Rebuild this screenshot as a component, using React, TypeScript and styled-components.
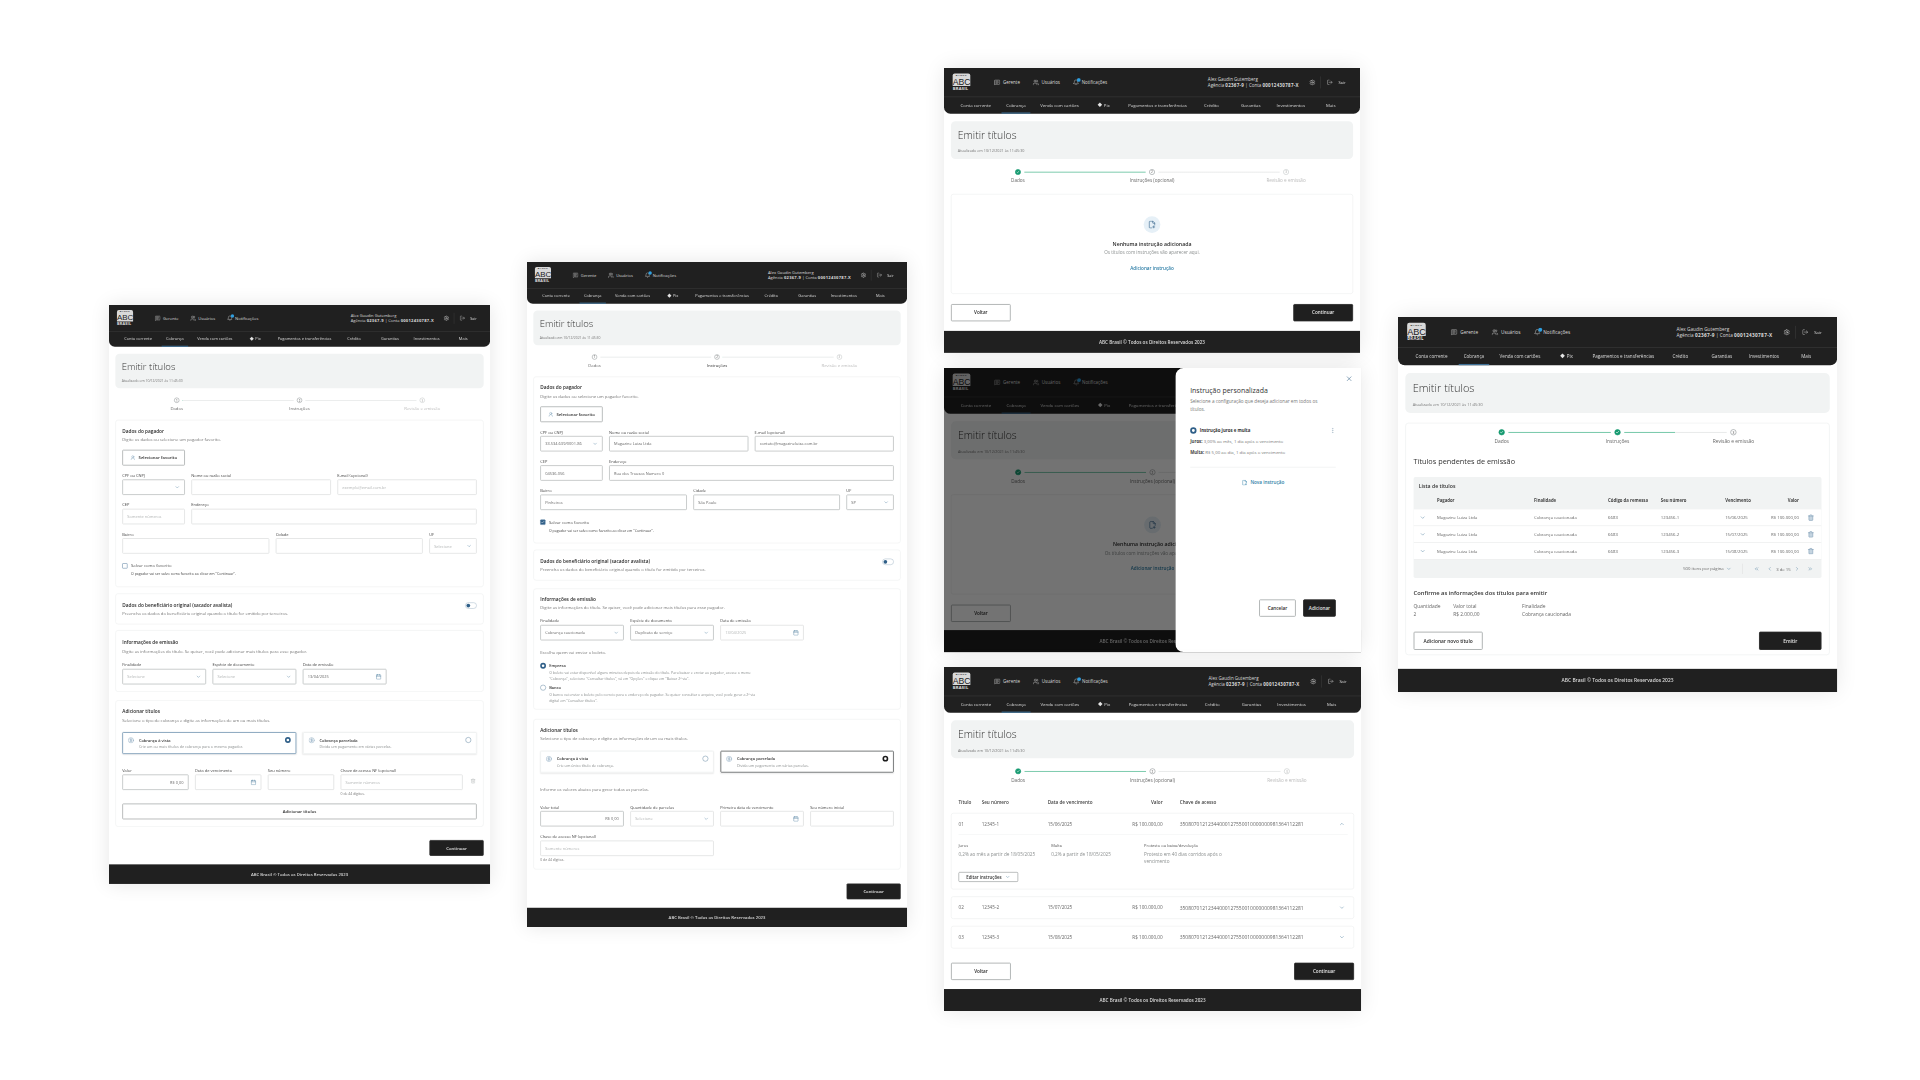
import React from "react"
import styled, { createGlobalStyle } from "styled-components"
import {
  Bell,
  Calendar,
  Check,
  ChevronDown,
  ChevronLeft,
  ChevronRight,
  ChevronUp,
  ChevronsLeft,
  ChevronsRight,
  CircleDollarSign,
  FilePlus2,
  LogOut,
  MessageSquareText,
  MoreVertical,
  Settings,
  Trash2,
  UserRound,
  Users,
  X,
} from "lucide-react"

const GlobalStyle = createGlobalStyle`
  html, body { margin: 0; background: #fff; }
  * { box-sizing: border-box; }
  body { font-family: "Open Sans", "Noto Sans", sans-serif; color: #333; }
`

const Canvas = styled.div`
  position: relative;
  width: 1920px;
  height: 1080px;
  overflow: hidden;
  background: #fff;
`

const Screen = styled.section<{ $x: number; $y: number; $scale: number; $h: number }>`
  position: absolute;
  left: ${p => p.$x}px;
  top: ${p => p.$y}px;
  width: 1440px;
  height: ${p => p.$h}px;
  display: flex;
  flex-direction: column;
  overflow: hidden;
  background: #fff;
  transform: scale(${p => p.$scale});
  transform-origin: 0 0;
  box-shadow: 0 0 70px rgba(0, 0, 0, 0.1);
`

/* header */
const HeaderWrap = styled.header`
  flex: none;
  background: #202020;
  border-radius: 0 0 22px 22px;
  color: #dcdcdc;
`

const TopBar = styled.div`
  display: flex;
  align-items: center;
  height: 101px;
  padding: 0 50px 0 30px;
  border-bottom: 2px solid #3a3a3a;
  font-size: 15px;
`

const Logo = styled.div`
  width: 61px;
  display: flex;
  flex-direction: column;
  align-items: stretch;
  margin-right: 82px;
`

const LogoBox = styled.div`
  height: 43px;
  border-radius: 7px 7px 0 0;
  background: #d9d9d9;
  color: #222;
  text-align: center;
  font-family: "Liberation Sans", sans-serif;
  overflow: hidden;
`

const LogoSmall = styled.div`
  font-size: 8px;
  line-height: 14px;
  letter-spacing: 2px;
  font-weight: 700;
`

const LogoBig = styled.div`
  font-size: 30px;
  line-height: 30px;
  letter-spacing: 0;
`

const LogoCountry = styled.div`
  font-size: 14px;
  line-height: 18px;
  font-weight: 700;
  letter-spacing: 1px;
  color: #e0e0e0;
`

const HeaderLink = styled.span`
  display: flex;
  align-items: center;
  gap: 9px;
  margin-right: 44px;
  font-size: 15.5px;
`

const BellWrap = styled.span`
  position: relative;
  display: flex;
`

const BellDot = styled.i`
  position: absolute;
  top: -4px;
  right: -5px;
  width: 13px;
  height: 13px;
  border-radius: 50%;
  background: #2f9fe0;
`

const UserInfo = styled.div`
  margin-left: auto;
  width: 332px;
  font-size: 15.5px;
  line-height: 21px;
  white-space: nowrap;
  b { font-weight: 700; letter-spacing: 1px; }
`

const HeaderTools = styled.div`
  display: flex;
  align-items: center;
  margin-left: 19px;
`

const ToolDivider = styled.i`
  width: 2px;
  height: 42px;
  margin: 0 20px 0 17px;
  background: #3a3a3a;
`

const ExitLink = styled.span`
  display: flex;
  align-items: center;
  gap: 19px;
  font-size: 14px;
`

const NavBar = styled.nav`
  display: flex;
  height: 57px;
  padding-left: 30px;
  font-size: 15px;
`

const NavCell = styled.span<{ $w: number }>`
  flex: 0 0 ${p => p.$w}px;
  display: flex;
  justify-content: center;
`

const NavLabel = styled.span<{ $active?: boolean }>`
  display: flex;
  align-items: center;
  gap: 8px;
  padding: 0 17px;
  border-bottom: 4px solid ${p => (p.$active ? "#3f7197" : "transparent")};
`

const PixMark = styled.i`
  width: 11px;
  height: 11px;
  background: #e4e4e4;
  transform: rotate(45deg);
`

/* footer */
const FooterBar = styled.footer<{ $h?: number }>`
  flex: none;
  margin-top: auto;
  height: ${p => p.$h ?? 76}px;
  display: flex;
  align-items: center;
  justify-content: center;
  background: #202020;
  color: #dcdcdc;
  font-size: 16px;
  font-weight: 600;
`

/* page parts */
const Main = styled.main`
  display: flex;
  flex-direction: column;
  padding: 26px 24px 0;
`

const TitleCard = styled.div`
  height: 131px;
  padding: 24px;
  border-radius: 16px;
  background: #f1f3f3;
`

const PageTitle = styled.h1`
  margin: 0;
  font-size: 36px;
  line-height: 50px;
  font-weight: 300;
  color: #333;
`

const Updated = styled.p`
  margin: 20px 0 0;
  font-size: 13px;
  line-height: 18px;
  color: #777;
`

const StepperWrap = styled.div<{ $w: number; $mt: number }>`
  width: ${p => p.$w}px;
  margin: ${p => p.$mt}px auto 0;
`

const StepTrack = styled.div<{ $w: number }>`
  display: flex;
  align-items: center;
  gap: 12px;
  padding: 0 ${p => p.$w / 6 - 10}px;
`

const StepDot = styled.span<{ $state: "done" | "open" | "off" }>`
  flex: none;
  width: 20px;
  height: 20px;
  display: flex;
  align-items: center;
  justify-content: center;
  border-radius: 50%;
  border: 2px solid ${p => (p.$state === "done" ? "#159a70" : p.$state === "open" ? "#8e9496" : "#c4c8c8")};
  background: ${p => (p.$state === "done" ? "#159a70" : "#fff")};
  color: ${p => (p.$state === "open" ? "#777" : p.$state === "off" ? "#bbb" : "#fff")};
  font-size: 11px;
  font-weight: 600;
`

const StepLine = styled.i<{ $fill: number }>`
  flex: 1;
  height: 3px;
  background: linear-gradient(
    to right,
    #69c3a1 ${p => p.$fill}%,
    #e6e8e8 ${p => p.$fill}%
  );
`

const StepLabels = styled.div`
  display: grid;
  grid-template-columns: repeat(3, 1fr);
  margin-top: 9px;
`

const StepLabel = styled.span<{ $tone: string }>`
  text-align: center;
  font-size: 16px;
  line-height: 22px;
  color: ${p => p.$tone};
`

const Card = styled.div<{ $mt?: number; $pt?: number; $pb?: number }>`
  margin-top: ${p => p.$mt ?? 30}px;
  padding: ${p => p.$pt ?? 27}px 24px ${p => p.$pb ?? 26}px;
  border: 2px solid #eceeee;
  border-radius: 10px;
`

const CardTitle = styled.h3`
  margin: 0;
  font-size: 18px;
  line-height: 24px;
  font-weight: 600;
  color: #2b2b2b;
`

const CardText = styled.p<{ $mt?: number }>`
  margin: ${p => p.$mt ?? 11}px 0 0;
  font-size: 16px;
  line-height: 22px;
  color: #777;
`

const OutlineButton = styled.button<{ $w?: number; $mt?: number }>`
  flex: none;
  display: flex;
  align-items: center;
  justify-content: center;
  gap: 12px;
  width: ${p => (p.$w ? `${p.$w}px` : "100%")};
  height: 60px;
  margin-top: ${p => p.$mt ?? 0}px;
  border: 3px solid #a9adad;
  border-radius: 4px;
  background: #fff;
  color: #2b2b2b;
  font: 600 16px "Open Sans", sans-serif;
`

const DarkButton = styled(OutlineButton)`
  border-color: #2a2a2a;
  background: #1f1f1f;
  color: #e6e6e6;
`

const FormGrid = styled.div<{ $cols: string; $mt?: number }>`
  display: grid;
  grid-template-columns: ${p => p.$cols};
  gap: 28px 24px;
  margin-top: ${p => p.$mt ?? 27}px;
`

const FieldWrap = styled.div<{ $span?: number }>`
  display: flex;
  flex-direction: column;
  gap: 5px;
  min-width: 0;
  grid-column: span ${p => p.$span ?? 1};
`

const FieldLabel = styled.label`
  font-size: 15px;
  line-height: 20px;
  color: #444;
`

const FieldBox = styled.div<{ $strong?: boolean; $right?: boolean }>`
  height: 59px;
  display: flex;
  align-items: center;
  justify-content: ${p => (p.$right ? "flex-end" : "space-between")};
  padding: 0 16px;
  border: 3px solid ${p => (p.$strong ? "#bcc0c0" : "#dfe1e1")};
  border-radius: 4px;
  color: #666;
  font-size: 15px;
  white-space: nowrap;
  overflow: hidden;
`

const FieldValue = styled.span<{ $muted?: boolean }>`
  color: ${p => (p.$muted ? "#b2b5b5" : "#666")};
`

const FieldHint = styled.span`
  font-size: 13px;
  line-height: 18px;
  color: #777;
`

const TrashSlot = styled.div`
  display: flex;
  justify-content: center;
  padding-top: 40px;
  color: #b6baba;
`

const CheckRow = styled.div`
  display: flex;
  align-items: center;
  gap: 13px;
  margin-top: 34px;
  font-size: 16px;
  line-height: 24px;
  color: #555;
`

const CheckBox = styled.i<{ $on?: boolean }>`
  width: 20px;
  height: 20px;
  display: flex;
  align-items: center;
  justify-content: center;
  border-radius: 3px;
  border: 2px solid #5f84a3;
  background: ${p => (p.$on ? "#2f5f88" : "#fff")};
  color: #fff;
`

const CheckNote = styled.p`
  margin: 10px 0 12px 33px;
  font-size: 13.5px;
  line-height: 18px;
  color: #444;
`

const SwitchRow = styled.div`
  display: flex;
  justify-content: space-between;
  align-items: flex-start;
`

const SwitchTrack = styled.i`
  width: 44px;
  height: 24px;
  margin-top: 2px;
  padding: 3px;
  display: flex;
  border-radius: 12px;
  border: 2px solid #a9bccb;
`

const SwitchKnob = styled.b`
  width: 14px;
  height: 14px;
  border-radius: 50%;
  background: #2f5f88;
`

const OptionGrid = styled.div`
  display: grid;
  grid-template-columns: 1fr 1fr;
  gap: 25px;
  margin-top: 34px;
`

const OptionCard = styled.div<{ $active?: string }>`
  height: 83px;
  display: flex;
  align-items: flex-start;
  gap: 18px;
  padding: 16px 18px;
  border: 3px solid ${p => p.$active ?? "#eceeee"};
  border-radius: 4px;
  box-shadow: 0 2px 6px rgba(0, 0, 0, 0.08);
`

const OptionIcon = styled.span`
  display: flex;
  color: #6f93b0;
`

const OptionBody = styled.div`
  flex: 1;
`

const OptionTitle = styled.div`
  font-size: 15px;
  line-height: 22px;
  font-weight: 600;
  color: #333;
`

const OptionText = styled.div`
  margin-top: 5px;
  font-size: 14px;
  line-height: 20px;
  color: #8b8f8f;
`

const RadioDot = styled.i<{ $color?: string }>`
  flex: none;
  width: 22px;
  height: 22px;
  display: flex;
  align-items: center;
  justify-content: center;
  border-radius: 50%;
  border: ${p => (p.$color ? `6px solid ${p.$color}` : "2px solid #6f8fa8")};
  background: #fff;
`

const RadioRow = styled.div<{ $mt: number }>`
  display: flex;
  align-items: center;
  gap: 12px;
  margin-top: ${p => p.$mt}px;
  font-size: 15px;
  font-weight: 600;
  line-height: 22px;
  color: #333;
`

const RadioText = styled.p`
  margin: 6px 0 0 34px;
  max-width: 800px;
  font-size: 13.5px;
  line-height: 22px;
  color: #8b8f8f;
`

const ActionRow = styled.div<{ $mt: number; $end?: boolean }>`
  display: flex;
  justify-content: ${p => (p.$end ? "flex-end" : "space-between")};
  margin-top: ${p => p.$mt}px;
`

/* empty state */
const EmptyCard = styled.div`
  height: 346px;
  margin-top: 35px;
  display: flex;
  flex-direction: column;
  align-items: center;
  padding-top: 75px;
  border: 2px solid #eceeee;
  border-radius: 8px;
`

const EmptyIcon = styled.span`
  width: 58px;
  height: 58px;
  display: flex;
  align-items: center;
  justify-content: center;
  border-radius: 50%;
  background: #e6f0f7;
  color: #2f5f88;
`

const EmptyTitle = styled.div`
  margin-top: 26px;
  font-size: 18px;
  line-height: 24px;
  font-weight: 600;
  color: #2b2b2b;
`

const EmptyText = styled.div`
  margin-top: 7px;
  font-size: 16px;
  line-height: 22px;
  color: #8b8f8f;
`

const TextLink = styled.span`
  display: flex;
  align-items: center;
  gap: 10px;
  margin-top: 31px;
  font-size: 16px;
  line-height: 22px;
  font-weight: 600;
  color: #2c7da6;
`

/* drawer */
const Backdrop = styled.div`
  position: absolute;
  inset: 0;
  background: rgba(0, 0, 0, 0.55);
`

const Drawer = styled.aside`
  position: absolute;
  top: 0;
  right: 0;
  bottom: 0;
  width: 641px;
  display: flex;
  flex-direction: column;
  padding: 62px 87px 0 51px;
  border-radius: 28px 0 0 28px;
  background: #fff;
`

const DrawerClose = styled.span`
  position: absolute;
  top: 24px;
  right: 28px;
  color: #4f7796;
`

const DrawerTitle = styled.h2`
  margin: 0;
  font-size: 24px;
  line-height: 28px;
  font-weight: 500;
  color: #333;
`

const DrawerText = styled.p`
  margin: 12px 0 0;
  max-width: 480px;
  font-size: 16px;
  line-height: 26px;
  color: #777;
`

const InstructionHead = styled.div`
  display: flex;
  align-items: center;
  gap: 11px;
  margin-top: 51px;
  font-size: 15px;
  font-weight: 700;
  color: #333;
  svg { margin-left: auto; color: #9fb4c4; }
`

const InstructionLine = styled.div<{ $mt: number }>`
  margin-top: ${p => p.$mt}px;
  font-size: 15px;
  line-height: 22px;
  color: #777;
  b { color: #444; }
`

const DrawerRule = styled.hr`
  width: 100%;
  margin: 39px 0 0;
  border: 0;
  border-top: 3px solid #f1f3f3;
`

const DrawerLink = styled(TextLink)`
  justify-content: center;
  margin-top: 41px;
`

const DrawerActions = styled.div`
  display: flex;
  justify-content: flex-end;
  gap: 25px;
  margin-top: auto;
  margin-bottom: 122px;
`

/* installment table */
const titleCols = "80px 228px 200px 197px 1fr 40px"

const TitleHead = styled.div`
  display: grid;
  grid-template-columns: ${titleCols};
  margin-top: 54px;
  padding: 0 20px 0 26px;
  font-size: 16px;
  line-height: 22px;
  font-weight: 600;
  color: #444;
`

const TitleRow = styled.div<{ $mt: number; $open?: boolean }>`
  margin-top: ${p => p.$mt}px;
  padding: 0 20px 0 24px;
  border: 2px solid #eceeee;
  border-radius: 8px;
`

const TitleCells = styled.div<{ $line?: boolean }>`
  display: grid;
  grid-template-columns: ${titleCols};
  align-items: center;
  height: 74px;
  border-bottom: ${p => (p.$line ? "2px solid #f1f3f3" : "0")};
  font-size: 16px;
  color: #666;
`

const CellRight = styled.span`
  display: flex;
  justify-content: flex-end;
  white-space: nowrap;
`

const CellKey = styled.span`
  padding-left: 59px;
  font-size: 17px;
  white-space: nowrap;
`

const CellKeyHead = styled.span`
  padding-left: 59px;
`

const CellChevron = styled.span`
  display: flex;
  justify-content: center;
  color: #5f8aa8;
`

const Detail = styled.div`
  display: grid;
  grid-template-columns: 320px 321px 300px;
  padding-top: 25px;
`

const DetailLabel = styled.div`
  font-size: 14px;
  line-height: 20px;
  color: #555;
`

const DetailText = styled.div`
  margin-top: 8px;
  font-size: 16px;
  line-height: 25px;
  color: #8b8f8f;
`

const EditButton = styled.button`
  display: flex;
  align-items: center;
  justify-content: center;
  gap: 12px;
  width: 206px;
  height: 34px;
  margin: 25px 0 24px;
  border: 2px solid #8d9192;
  border-radius: 4px;
  background: #fff;
  color: #333;
  font: 600 15px "Open Sans", sans-serif;
  svg { color: #5f8aa8; }
`

/* review */
const ReviewCard = styled.div`
  margin-top: 32px;
  padding: 19px 25px 15px;
  border: 2px solid #eceeee;
  border-radius: 10px;
`

const ReviewTitle = styled.h2`
  margin: 38px 0 0;
  font-size: 24px;
  line-height: 32px;
  font-weight: 400;
  color: #333;
`

const ListBlock = styled.div`
  margin-top: 36px;
  border-radius: 6px;
  overflow: hidden;
  background: #f1f3f3;
`

const ListTitle = styled.div`
  padding: 17px 17px 0;
  font-size: 17px;
  line-height: 24px;
  font-weight: 600;
  color: #333;
`

const listCols = "77px 318px 243px 173px 211px 158px 84px 76px"

const ListHead = styled.div`
  display: grid;
  grid-template-columns: ${listCols};
  height: 65px;
  padding-top: 26px;
  font-size: 14px;
  line-height: 20px;
  font-weight: 700;
  color: #444;
`

const ListRow = styled.div`
  display: grid;
  grid-template-columns: ${listCols};
  align-items: center;
  height: 55px;
  border-bottom: 2px solid #e6e8e8;
  background: #fff;
  font-size: 14px;
  color: #666;
`

const ListChevron = styled.span`
  display: flex;
  padding-left: 20px;
  color: #5f8aa8;
`

const ListTrash = styled.span`
  display: flex;
  padding-left: 28px;
  color: #7d9cb5;
`

const Pager = styled.div`
  display: flex;
  align-items: center;
  justify-content: flex-end;
  height: 60px;
  padding-right: 28px;
  font-size: 14px;
  color: #666;
`

const PagerSize = styled.span`
  display: flex;
  align-items: center;
  gap: 8px;
  padding-right: 35px;
  border-right: 2px solid #e0e2e2;
  line-height: 34px;
  svg { color: #5f8aa8; }
`

const PagerNav = styled.span`
  display: flex;
  align-items: center;
  gap: 25px;
  padding-left: 36px;
  svg { color: #5f8aa8; }
`

const PagerMid = styled.span`
  display: flex;
  align-items: center;
  gap: 12px;
`

const ConfirmTitle = styled.h3`
  margin: 37px 0 0;
  font-size: 19px;
  line-height: 26px;
  font-weight: 600;
  color: #333;
`

const ConfirmGrid = styled.div`
  display: grid;
  grid-template-columns: 130px 226px 1fr;
  margin-top: 17px;
  font-size: 16px;
  line-height: 27px;
  color: #666;
`

const navItems: { label: string; w: number; pix?: boolean; active?: boolean }[] = [
  { label: "Conta corrente", w: 160 },
  { label: "Cobrança", w: 118, active: true },
  { label: "Venda com cartões", w: 184 },
  { label: "Pix", w: 124, pix: true },
  { label: "Pagamentos e transferências", w: 246 },
  { label: "Crédito", w: 128 },
  { label: "Garantias", w: 144 },
  { label: "Investimentos", w: 126 },
  { label: "Mais", w: 144 },
]

const Header = () => (
  <HeaderWrap>
    <TopBar>
      <Logo>
        <LogoBox>
          <LogoSmall>BANCO</LogoSmall>
          <LogoBig>ABC</LogoBig>
        </LogoBox>
        <LogoCountry>BRASIL</LogoCountry>
      </Logo>
      <HeaderLink>
        <MessageSquareText size={22} strokeWidth={1.6} />
        Gerente
      </HeaderLink>
      <HeaderLink>
        <Users size={22} strokeWidth={1.6} />
        Usuários
      </HeaderLink>
      <HeaderLink>
        <BellWrap>
          <Bell size={22} strokeWidth={1.6} />
          <BellDot />
        </BellWrap>
        Notificações
      </HeaderLink>
      <UserInfo>
        Alex Gaudin Gutemberg
        <br />
        Agência <b>02367-9</b> | Conta <b>00012430787-X</b>
      </UserInfo>
      <HeaderTools>
        <Settings size={22} strokeWidth={1.8} />
        <ToolDivider />
        <ExitLink>
          <LogOut size={21} strokeWidth={1.6} />
          Sair
        </ExitLink>
      </HeaderTools>
    </TopBar>
    <NavBar>
      {navItems.map(n => (
        <NavCell key={n.label} $w={n.w}>
          <NavLabel $active={n.active}>
            {n.pix && <PixMark />}
            {n.label}
          </NavLabel>
        </NavCell>
      ))}
    </NavBar>
  </HeaderWrap>
)

const PageHead = () => (
  <TitleCard>
    <PageTitle>Emitir títulos</PageTitle>
    <Updated>Atualizado em 10/12/2021 às 11:45:30</Updated>
  </TitleCard>
)

type StepState = "done" | "open" | "off"

interface StepProps {
  labels: [string, string, string]
  tones: [string, string, string]
  states: [StepState, StepState, StepState]
  fills?: [number, number]
  width?: number
  mt?: number
}

const Stepper = ({ labels, tones, states, fills = [0, 0], width = 1392, mt = 35 }: StepProps) => (
  <StepperWrap $w={width} $mt={mt}>
    <StepTrack $w={width}>
      {states.map((s, i) => (
        <React.Fragment key={i}>
          <StepDot $state={s}>{s === "done" ? <Check size={12} strokeWidth={4} /> : i + 1}</StepDot>
          {i < 2 && <StepLine $fill={fills[i]} />}
        </React.Fragment>
      ))}
    </StepTrack>
    <StepLabels>
      {labels.map((l, i) => (
        <StepLabel key={l} $tone={tones[i]}>
          {l}
        </StepLabel>
      ))}
    </StepLabels>
  </StepperWrap>
)

interface FieldProps {
  label: string
  value?: string
  muted?: boolean
  strong?: boolean
  right?: boolean
  kind?: "select" | "date"
  span?: number
  hint?: string
}

const Field = ({ label, value, muted, strong, right, kind, span, hint }: FieldProps) => (
  <FieldWrap $span={span}>
    <FieldLabel>{label}</FieldLabel>
    <FieldBox $strong={strong} $right={right}>
      <FieldValue $muted={muted}>{value}</FieldValue>
      {kind === "select" && <ChevronDown size={20} color="#5f8aa8" />}
      {kind === "date" && <Calendar size={22} color="#5f8aa8" />}
    </FieldBox>
    {hint && <FieldHint>{hint}</FieldHint>}
  </FieldWrap>
)

const Radio = ({ color }: { color?: string }) => <RadioDot $color={color} />

const Option = ({ title, text, active, radio }: { title: string; text: string; active?: string; radio?: string }) => (
  <OptionCard $active={active}>
    <OptionIcon>
      <CircleDollarSign size={24} strokeWidth={1.5} />
    </OptionIcon>
    <OptionBody>
      <OptionTitle>{title}</OptionTitle>
      <OptionText>{text}</OptionText>
    </OptionBody>
    <Radio color={radio} />
  </OptionCard>
)

const Beneficiary = ({ mt }: { mt: number }) => (
  <Card $pt={30} $pb={30} $mt={mt}>
    <SwitchRow>
      <CardTitle>Dados do beneficiário original (sacador avalista)</CardTitle>
      <SwitchTrack>
        <SwitchKnob />
      </SwitchTrack>
    </SwitchRow>
    <CardText $mt={5}>Preencha os dados do beneficiário original quando o título for emitido por terceiros.</CardText>
  </Card>
)

const favoriteNote = "O pagador vai ser salvo como favorito ao clicar em \"Continuar\"."

const PayerCard = ({ filled }: { filled?: boolean }) => (
  <Card $mt={33} $pb={26}>
    <CardTitle>Dados do pagador</CardTitle>
    <CardText>Digite os dados ou selecione um pagador favorito.</CardText>
    <OutlineButton $w={237} $mt={27}>
      <UserRound size={20} color="#5f8aa8" strokeWidth={1.6} />
      Selecionar favorito
    </OutlineButton>
    <FormGrid $cols="237px 1fr 1fr">
      <Field label="CPF ou CNPJ" value={filled ? "33.534.639/0001-86" : ""} strong kind="select" />
      <Field label="Nome ou razão social" value={filled ? "Magazine Luiza Ltda" : ""} strong={filled} />
      <Field
        label="E-mail (opcional)"
        value={filled ? "contato@magazineluiza.com.br" : "exemplo@email.com.br"}
        muted={!filled}
        strong={filled}
      />
    </FormGrid>
    <FormGrid $cols="237px 1fr">
      <Field label="CEP" value={filled ? "04536-056" : "Somente números"} muted={!filled} strong={filled} />
      <Field label="Endereço" value={filled ? "Rua dos Trouxas Numero 0" : ""} strong={filled} />
    </FormGrid>
    <FormGrid $cols="1fr 1fr 180px">
      <Field label="Bairro" value={filled ? "Pinheiros" : ""} strong={filled} />
      <Field label="Cidade" value={filled ? "São Paulo" : ""} strong={filled} />
      <Field label="UF" value={filled ? "SP" : "Selecione"} muted={!filled} kind="select" strong={filled} />
    </FormGrid>
    <CheckRow>
      <CheckBox $on={filled}>{filled && <Check size={14} strokeWidth={3} />}</CheckBox>
      Salvar como favorito
    </CheckRow>
    <CheckNote>{favoriteNote}</CheckNote>
  </Card>
)

const FormOne = () => (
  <Screen $x={109} $y={305} $scale={0.2646} $h={2188}>
    <Header />
    <Main>
      <PageHead />
      <Stepper
        labels={["Dados", "Instruções", "Revisão e emissão"]}
        tones={["#666", "#666", "#bbb"]}
        states={["open", "open", "off"]}
      />
      <PayerCard />
      <Beneficiary mt={24} />
      <Card $mt={22} $pt={31}>
        <CardTitle>Informações de emissão</CardTitle>
        <CardText>Digite as informações do título. Se quiser, você pode adicionar mais títulos para esse pagador.</CardText>
        <FormGrid $cols="repeat(4, 1fr)" $mt={31}>
          <Field label="Finalidade" value="Selecione" muted kind="select" strong />
          <Field label="Espécie de documento" value="Selecione" muted kind="select" strong />
          <Field label="Data de emissão" value="13/04/2025" kind="date" strong />
        </FormGrid>
      </Card>
      <Card $mt={32} $pt={27}>
        <CardTitle>Adicionar títulos</CardTitle>
        <CardText>Selecione o tipo de cobrança e digite as informações de um ou mais títulos.</CardText>
        <OptionGrid>
          <Option
            title="Cobrança à vista"
            text="Crie um ou mais títulos de cobrança para o mesmo pagador."
            active="#6f93b0"
            radio="#2f5f88"
          />
          <Option title="Cobrança parcelada" text="Divida um pagamento em várias parcelas." />
        </OptionGrid>
        <FormGrid $cols="251px 251px 251px 462px 1fr" $mt={52}>
          <Field label="Valor" value="R$ 0,00" right strong />
          <Field label="Data de vencimento" kind="date" />
          <Field label="Seu número" />
          <Field label="Chave de acesso NF (opcional)" value="Somente números" muted hint="0 de 44 dígitos." />
          <TrashSlot>
            <Trash2 size={20} />
          </TrashSlot>
        </FormGrid>
        <OutlineButton $mt={28}>Adicionar títulos</OutlineButton>
      </Card>
      <ActionRow $mt={50} $end>
        <DarkButton $w={205}>Continuar</DarkButton>
      </ActionRow>
    </Main>
    <FooterBar $h={74}>ABC Brasil © Todos os Direitos Reservados 2023</FooterBar>
  </Screen>
)

const FormTwo = () => (
  <Screen $x={527} $y={262} $scale={0.2639} $h={2520}>
    <Header />
    <Main>
      <PageHead />
      <Stepper
        labels={["Dados", "Instruções", "Revisão e emissão"]}
        tones={["#666", "#333", "#bbb"]}
        states={["open", "open", "off"]}
      />
      <PayerCard filled />
      <Beneficiary mt={24} />
      <Card $mt={30} $pt={25} $pb={20}>
        <CardTitle>Informações de emissão</CardTitle>
        <CardText>Digite as informações do título. Se quiser, você pode adicionar mais títulos para esse pagador.</CardText>
        <FormGrid $cols="repeat(4, 1fr)" $mt={29}>
          <Field label="Finalidade" value="Cobrança caucionada" kind="select" strong />
          <Field label="Espécie de documento" value="Duplicata de serviço" kind="select" strong />
          <Field label="Data de emissão" value="13/04/2025" muted kind="date" />
        </FormGrid>
        <CardText $mt={36}>Escolha quem vai enviar o boleto.</CardText>
        <RadioRow $mt={27}>
          <Radio color="#2f5f88" />
          Empresa
        </RadioRow>
        <RadioText>
          O boleto vai estar disponível alguns minutos depois da emissão do título. Para baixar e enviar ao pagador,
          acesse o menu "Cobrança", selecione "Consultar títulos", vá em "Opções" e clique em "Baixar 2ª via".
        </RadioText>
        <RadioRow $mt={11}>
          <Radio />
          Banco
        </RadioRow>
        <RadioText>
          O banco vai enviar o boleto pelo correio para o endereço do pagador. Se quiser consultar o arquivo, você pode
          gerar a 2ª via digital em "Consultar títulos".
        </RadioText>
      </Card>
      <Card $mt={36}>
        <CardTitle>Adicionar títulos</CardTitle>
        <CardText>Selecione o tipo de cobrança e digite as informações de um ou mais títulos.</CardText>
        <OptionGrid>
          <Option title="Cobrança à vista" text="Crie um único título de cobrança." />
          <Option
            title="Cobrança parcelada"
            text="Divida um pagamento em várias parcelas."
            active="#55595a"
            radio="#1c1c1c"
          />
        </OptionGrid>
        <CardText $mt={54}>Informe os valores abaixo para gerar todas as parcelas.</CardText>
        <FormGrid $cols="repeat(4, 1fr)" $mt={44}>
          <Field label="Valor total" value="R$ 0,00" right strong />
          <Field label="Quantidade de parcelas" value="Selecione" muted kind="select" />
          <Field label="Primeira data de vencimento" kind="date" />
          <Field label="Seu número inicial" />
          <Field label="Chave de acesso NF (opcional)" value="Somente números" muted span={2} hint="0 de 44 dígitos." />
        </FormGrid>
      </Card>
      <ActionRow $mt={53} $end>
        <DarkButton $w={205}>Continuar</DarkButton>
      </ActionRow>
    </Main>
    <FooterBar $h={73}>ABC Brasil © Todos os Direitos Reservados 2023</FooterBar>
  </Screen>
)

const EmptyInstructions = () => (
  <>
    <Header />
    <Main>
      <PageHead />
      <Stepper
        labels={["Dados", "Instruções (opcional)", "Revisão e emissão"]}
        tones={["#666", "#666", "#bbb"]}
        states={["done", "open", "off"]}
        fills={[100, 0]}
      />
      <EmptyCard>
        <EmptyIcon>
          <FilePlus2 size={28} strokeWidth={1.7} />
        </EmptyIcon>
        <EmptyTitle>Nenhuma instrução adicionada</EmptyTitle>
        <EmptyText>Os títulos com instruções vão aparecer aqui.</EmptyText>
        <TextLink>Adicionar instrução</TextLink>
      </EmptyCard>
      <ActionRow $mt={35}>
        <OutlineButton $w={207}>Voltar</OutlineButton>
        <DarkButton $w={207}>Continuar</DarkButton>
      </ActionRow>
    </Main>
    <FooterBar>ABC Brasil © Todos os Direitos Reservados 2023</FooterBar>
  </>
)

const EmptyScreen = () => (
  <Screen $x={944} $y={68} $scale={0.2889} $h={986}>
    <EmptyInstructions />
  </Screen>
)

const DrawerScreen = () => (
  <Screen $x={944} $y={368} $scale={0.2896} $h={981}>
    <EmptyInstructions />
    <Backdrop />
    <Drawer>
      <DrawerClose>
        <X size={26} strokeWidth={2} />
      </DrawerClose>
      <DrawerTitle>Instrução personalizada</DrawerTitle>
      <DrawerText>Selecione a configuração que deseja adicionar em todos os títulos.</DrawerText>
      <InstructionHead>
        <Radio color="#2f5f88" />
        Instrução juros e multa
        <MoreVertical size={22} />
      </InstructionHead>
      <InstructionLine $mt={16}>
        <b>Juros:</b> 3,00% ao mês, 1 dia após o vencimento
      </InstructionLine>
      <InstructionLine $mt={15}>
        <b>Multa:</b> R$ 5,00 ao dia, 1 dia após o vencimento
      </InstructionLine>
      <DrawerRule />
      <DrawerLink>
        <FilePlus2 size={20} strokeWidth={1.8} />
        Nova instrução
      </DrawerLink>
      <DrawerActions>
        <OutlineButton $w={127}>Cancelar</OutlineButton>
        <DarkButton $w={113}>Adicionar</DarkButton>
      </DrawerActions>
    </Drawer>
  </Screen>
)

const accessKey = "35080701212344000127550010000000981364112281"

const titles = [
  { n: "01", num: "12345-1", date: "15/06/2025" },
  { n: "02", num: "12345-2", date: "15/07/2025" },
  { n: "03", num: "12345-3", date: "15/08/2025" },
]

const TitlesScreen = () => (
  <Screen $x={944} $y={667} $scale={0.2896} $h={1188}>
    <Header />
    <Main>
      <PageHead />
      <Stepper
        labels={["Dados", "Instruções (opcional)", "Revisão e emissão"]}
        tones={["#666", "#666", "#bbb"]}
        states={["done", "open", "off"]}
        fills={[100, 0]}
      />
      <TitleHead>
        <span>Título</span>
        <span>Seu número</span>
        <span>Data de vencimento</span>
        <CellRight>Valor</CellRight>
        <CellKeyHead>Chave de acesso</CellKeyHead>
      </TitleHead>
      {titles.map((t, i) => (
        <TitleRow key={t.n} $mt={i === 0 ? 27 : 24}>
          <TitleCells $line={i === 0}>
            <span>{t.n}</span>
            <span>{t.num}</span>
            <span>{t.date}</span>
            <CellRight>R$ 100.000,00</CellRight>
            <CellKey>{accessKey}</CellKey>
            <CellChevron>{i === 0 ? <ChevronUp size={20} /> : <ChevronDown size={20} />}</CellChevron>
          </TitleCells>
          {i === 0 && (
            <>
              <Detail>
                <div>
                  <DetailLabel>Juros</DetailLabel>
                  <DetailText>0,2% ao mês a partir de 18/05/2025</DetailText>
                </div>
                <div>
                  <DetailLabel>Multa</DetailLabel>
                  <DetailText>0,2% a partir de 18/05/2025</DetailText>
                </div>
                <div>
                  <DetailLabel>Protesto ou baixa/devolução</DetailLabel>
                  <DetailText>Protesto em 40 dias corridos após o vencimento</DetailText>
                </div>
              </Detail>
              <EditButton>
                Editar instruções
                <ChevronDown size={18} />
              </EditButton>
            </>
          )}
        </TitleRow>
      ))}
      <ActionRow $mt={49}>
        <OutlineButton $w={207}>Voltar</OutlineButton>
        <DarkButton $w={207}>Continuar</DarkButton>
      </ActionRow>
    </Main>
    <FooterBar>ABC Brasil © Todos os Direitos Reservados 2023</FooterBar>
  </Screen>
)

const listRows = [
  { num: "123456-1", date: "15/06/2025" },
  { num: "123456-2", date: "15/07/2025" },
  { num: "123456-3", date: "15/08/2025" },
]

const ReviewScreen = () => (
  <Screen $x={1398} $y={317} $scale={0.3049} $h={1230}>
    <Header />
    <Main>
      <PageHead />
      <ReviewCard>
        <Stepper
          labels={["Dados", "Instruções", "Revisão e emissão"]}
          tones={["#666", "#666", "#666"]}
          states={["done", "done", "open"]}
          fills={[100, 50]}
          width={1140}
          mt={0}
        />
        <ReviewTitle>Títulos pendentes de emissão</ReviewTitle>
        <ListBlock>
          <ListTitle>Lista de títulos</ListTitle>
          <ListHead>
            <span />
            <span>Pagador</span>
            <span>Finalidade</span>
            <span>Código da remessa</span>
            <span>Seu número</span>
            <span>Vencimento</span>
            <CellRight>Valor</CellRight>
          </ListHead>
          {listRows.map(r => (
            <ListRow key={r.num}>
              <ListChevron>
                <ChevronDown size={20} />
              </ListChevron>
              <span>Magazine Luiza Ltda</span>
              <span>Cobrança caucionada</span>
              <span>6683</span>
              <span>{r.num}</span>
              <span>{r.date}</span>
              <CellRight>R$ 100.000,00</CellRight>
              <ListTrash>
                <Trash2 size={22} fill="#c5d4e0" />
              </ListTrash>
            </ListRow>
          ))}
          <Pager>
            <PagerSize>
              500 itens por página
              <ChevronDown size={18} />
            </PagerSize>
            <PagerNav>
              <ChevronsLeft size={18} />
              <PagerMid>
                <ChevronLeft size={18} />
                3 de 15
                <ChevronRight size={18} />
              </PagerMid>
              <ChevronsRight size={18} />
            </PagerNav>
          </Pager>
        </ListBlock>
        <ConfirmTitle>Confirme as informações dos títulos para emitir</ConfirmTitle>
        <ConfirmGrid>
          <span>Quantidade</span>
          <span>Valor total</span>
          <span>Finalidade</span>
          <span>2</span>
          <span>R$ 2.000,00</span>
          <span>Cobrança caucionada</span>
        </ConfirmGrid>
        <ActionRow $mt={42}>
          <OutlineButton $w={227}>Adicionar novo título</OutlineButton>
          <DarkButton $w={205}>Emitir</DarkButton>
        </ActionRow>
      </ReviewCard>
    </Main>
    <FooterBar>ABC Brasil © Todos os Direitos Reservados 2023</FooterBar>
  </Screen>
)

export default function App() {
  return (
    <>
      <GlobalStyle />
      <Canvas>
        <FormOne />
        <FormTwo />
        <EmptyScreen />
        <DrawerScreen />
        <TitlesScreen />
        <ReviewScreen />
      </Canvas>
    </>
  )
}
